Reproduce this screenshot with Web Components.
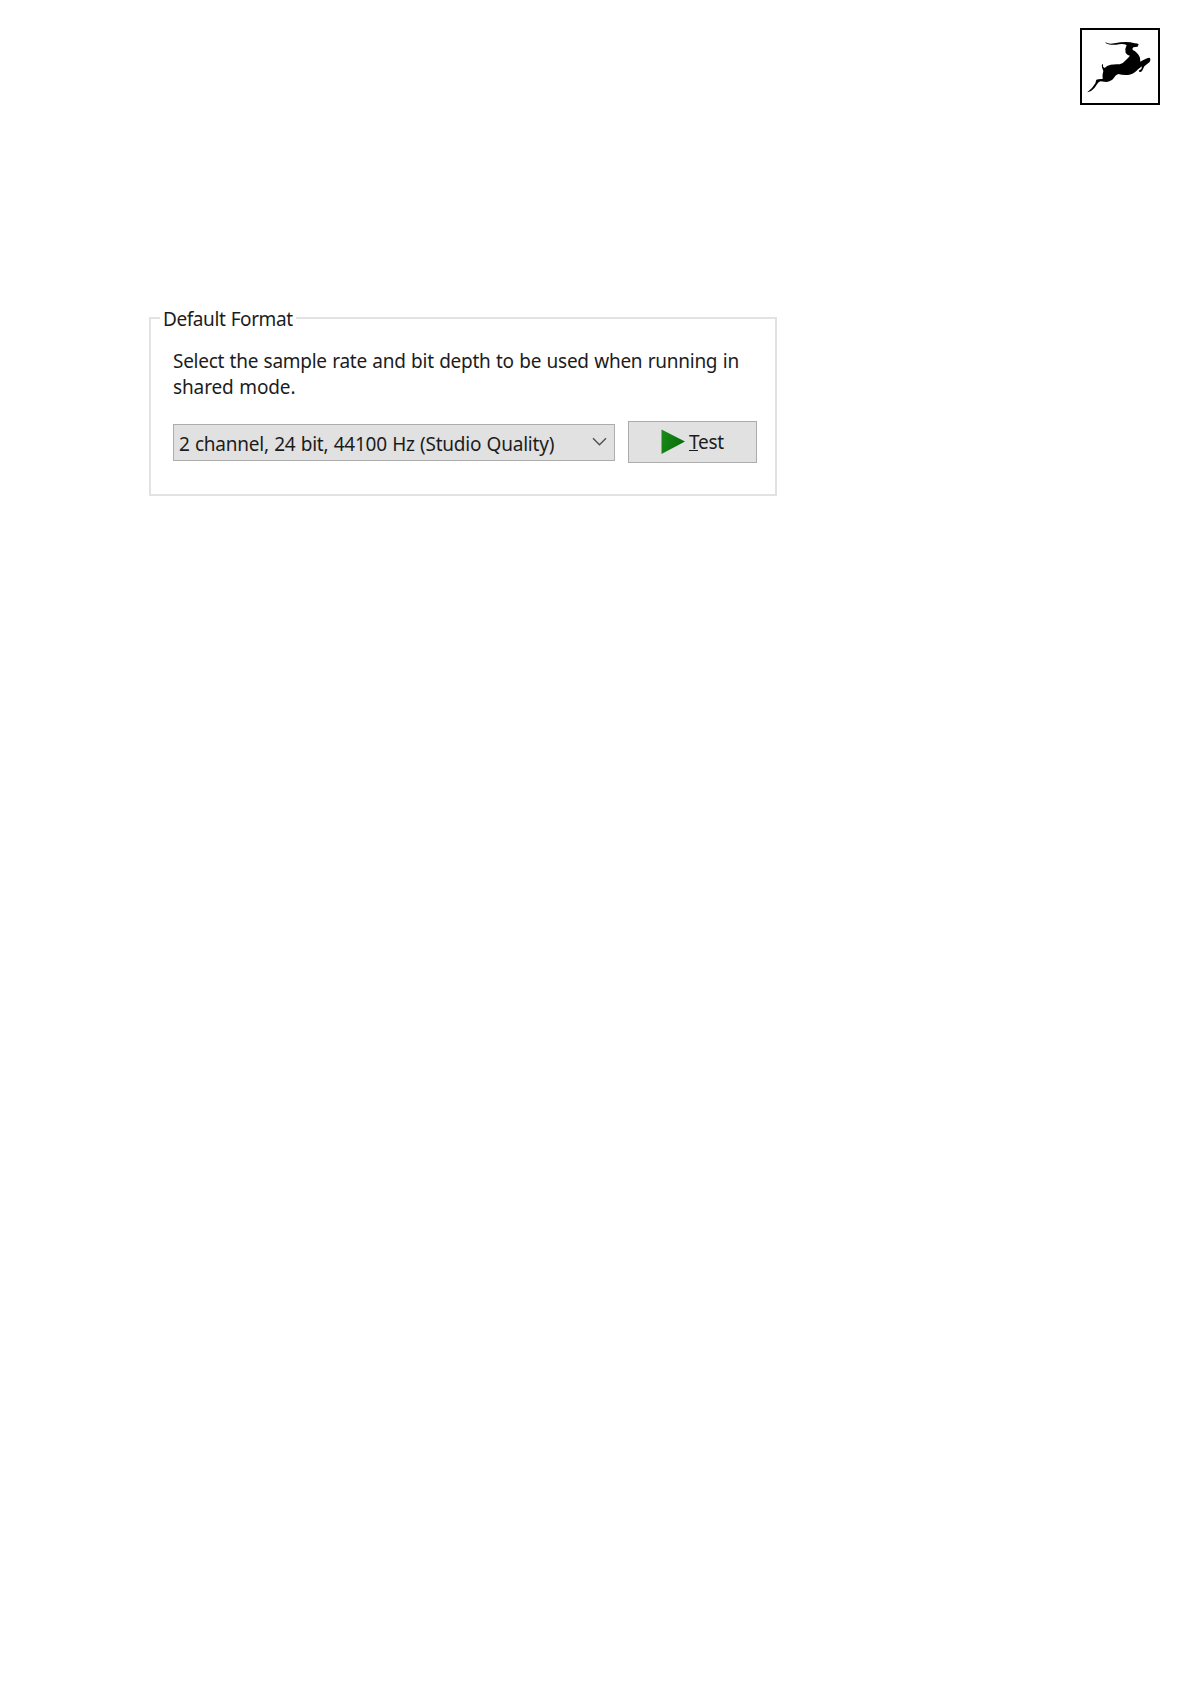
<!DOCTYPE html>
<html lang="en">
<head>
<meta charset="utf-8">
<title>Default Format</title>
<style>
body {
    margin: 0;
    background: #ffffff;
    color: #1c1c1c;
    font-family: "Noto Sans", "Open Sans", sans-serif;
    font-size: 19px;
    letter-spacing: -0.27px;
    word-spacing: 0.8px;
}
</style>
</head>
<body>
<manual-page>
    <brand-logo slot="header"></brand-logo>
    <group-box>
        <span slot="legend">Default Format</span>
        <div>Select the sample rate and bit depth to be used when running in</div>
        <div style="letter-spacing: -0.12px">shared mode.</div>
        <format-select slot="controls">2 channel, 24 bit, 44100 Hz (Studio Quality)</format-select>
        <test-button slot="controls"><u>T</u>est</test-button>
    </group-box>
</manual-page>

<script>
class ManualPage extends HTMLElement {
    connectedCallback() {
        const shadow = this.attachShadow({ mode: 'open' });
        shadow.innerHTML = `<style>
        :host {
            display: block;
            box-sizing: border-box;
            height: 1684px;
            padding: 28px 31px 0 149px;
        }
        header {
            display: flex;
            justify-content: flex-end;
            height: 276px;
        }
        </style>
        <header><slot name="header"></slot></header>
        <main><slot></slot></main>`;
    }
}

class BrandLogo extends HTMLElement {
    connectedCallback() {
        const shadow = this.attachShadow({ mode: 'open' });
        shadow.innerHTML = `<style>
        :host {
            display: block;
            box-sizing: border-box;
            width: 80px;
            height: 76.5px;
            border: 2px solid #000000;
        }
        svg { display: block; }
        </style>
        <svg width="76" height="72" viewBox="36 30 228 216">
            <path d="M105 66 Q113 71 122 71 Q140 70 151 67 Q168 65 181 67 L194 70 Q203 70 206 73 L203 80 L190 82 Q186 86 188 90 Q195 92 200 98 Q211 107 211 125 Q219 121 225 118 Q234 112 240 114 Q243 120 239 126 L223 139 Q219 148 216 153 Q211 158 208 155 L206 152 L214 147 L216 139 Q206 146 199 153 Q188 164 174 165 Q156 166 145 162 Q137 165 133 172 Q125 185 109 186 L91 184 Q84 187 81 193 Q73 208 63 213 L53 217 Q51 215 56 213 Q68 204 76 190 L79 179 Q87 176 98 177 Q96 166 100 153 L96 142 Q94 135 98 131 Q100 132 99 140 L104 144 Q110 136 122 134 Q135 132 149 133 Q160 130 168 120 Q175 113 180 107 Q173 107 167 99 Q164 85 170 75 Q160 71 147 73 Q130 76 115 73 Q108 71 105 66 Z"/>
        </svg>`;
    }
}

class GroupBox extends HTMLElement {
    connectedCallback() {
        const shadow = this.attachShadow({ mode: 'open' });
        shadow.innerHTML = `<style>
        :host { display: block; width: 628px; }
        fieldset {
            box-sizing: border-box;
            height: 192px;
            margin: 0;
            padding: 0 18px 0 22px;
            border: 2px solid #e2e2e2;
        }
        legend {
            margin-left: -13px;
            padding: 0 3px;
            height: 28px;
            line-height: 31px;
            letter-spacing: -0.42px;
            white-space: nowrap;
        }
        .text {
            padding-top: 17px;
            line-height: 25.5px;
            white-space: nowrap;
        }
        .controls {
            display: flex;
            align-items: center;
            justify-content: space-between;
            margin-top: 21px;
        }
        </style>
        <fieldset>
            <legend><slot name="legend"></slot></legend>
            <div class="text"><slot></slot></div>
            <div class="controls"><slot name="controls"></slot></div>
        </fieldset>`;
    }
}

class FormatSelect extends HTMLElement {
    connectedCallback() {
        const shadow = this.attachShadow({ mode: 'open' });
        shadow.innerHTML = `<style>
        :host {
            display: flex;
            align-items: center;
            justify-content: space-between;
            box-sizing: border-box;
            width: 442px;
            height: 37px;
            padding: 0 7px 0 5px;
            border: 1.5px solid #acacac;
            background: #e1e1e1;
            letter-spacing: -0.21px;
            word-spacing: 0.5px;
            white-space: nowrap;
        }
        span { padding-top: 3px; }
        svg { flex: none; }
        </style>
        <span><slot></slot></span>
        <svg width="15" height="10" viewBox="0 0 15 10">
            <path d="M1 1.2 L7.5 7.8 L14 1.2" fill="none" stroke="#505050" stroke-width="1.4"/>
        </svg>`;
    }
}

class TestButton extends HTMLElement {
    connectedCallback() {
        const shadow = this.attachShadow({ mode: 'open' });
        shadow.innerHTML = `<style>
        :host {
            display: flex;
            align-items: center;
            box-sizing: border-box;
            width: 129px;
            height: 42px;
            padding-left: 32px;
            border: 1.5px solid #acacac;
            background: #e1e1e1;
            letter-spacing: -0.25px;
        }
        svg { margin-right: 4px; flex: none; }
        </style>
        <svg width="24" height="26" viewBox="0 0 24 26">
            <defs>
                <linearGradient id="play" x1="0" y1="0" x2="1" y2="0.3">
                    <stop offset="0" stop-color="#1c8a1c"/>
                    <stop offset="1" stop-color="#087008"/>
                </linearGradient>
            </defs>
            <path d="M0.5 0.5 L24 12.5 L0.5 25 Z" fill="url(#play)"/>
        </svg>
        <span><slot></slot></span>`;
    }
}

customElements.define('manual-page', ManualPage);
customElements.define('brand-logo', BrandLogo);
customElements.define('group-box', GroupBox);
customElements.define('format-select', FormatSelect);
customElements.define('test-button', TestButton);
</script>
</body>
</html>
